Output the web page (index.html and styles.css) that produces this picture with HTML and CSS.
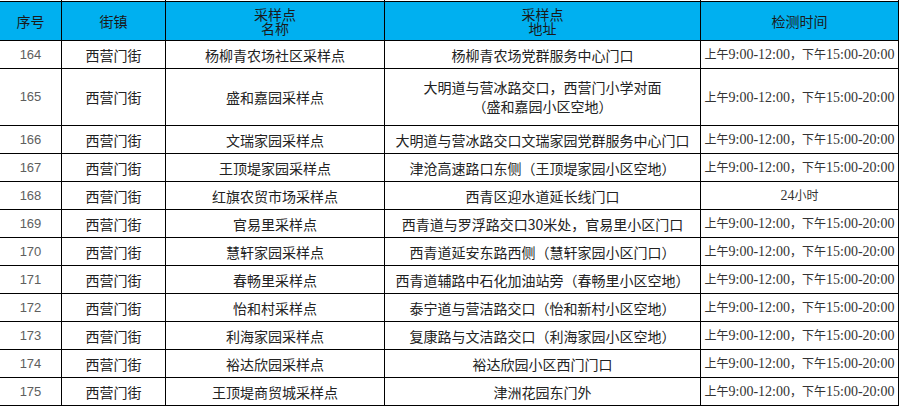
FILE: index.html
```html
<!DOCTYPE html>
<html lang="zh-CN">
<head>
<meta charset="utf-8">
<title>采样点</title>
<link rel="stylesheet" href="styles.css">
</head>
<body>
<table class="sheet">
  <colgroup>
    <col class="c-no"><col class="c-town"><col class="c-name"><col class="c-addr"><col class="c-time">
  </colgroup>
  <tr class="stub"><td></td><td></td><td></td><td></td><td></td></tr>
  <tr class="head">
    <th>序号</th>
    <th>街镇</th>
    <th><span class="hl">采样点</span><span class="hl">名称</span></th>
    <th><span class="hl">采样点</span><span class="hl">地址</span></th>
    <th>检测时间</th>
  </tr>
  <tr><td class="no">164</td><td>西营门街</td><td>杨柳青农场社区采样点</td><td>杨柳青农场党群服务中心门口</td><td class="time"><span class="cn">上午</span>9:00-12:00<span class="cn">，下午</span>15:00-20:00</td></tr>
  <tr class="tall"><td class="no">165</td><td>西营门街</td><td>盛和嘉园采样点</td><td><span class="ln">大明道与营冰路交口，西营门小学对面</span><span class="ln">（盛和嘉园小区空地）</span></td><td class="time"><span class="cn">上午</span>9:00-12:00<span class="cn">，下午</span>15:00-20:00</td></tr>
  <tr><td class="no">166</td><td>西营门街</td><td>文瑞家园采样点</td><td>大明道与营冰路交口文瑞家园党群服务中心门口</td><td class="time"><span class="cn">上午</span>9:00-12:00<span class="cn">，下午</span>15:00-20:00</td></tr>
  <tr><td class="no">167</td><td>西营门街</td><td>王顶堤家园采样点</td><td>津沧高速路口东侧（王顶堤家园小区空地）</td><td class="time"><span class="cn">上午</span>9:00-12:00<span class="cn">，下午</span>15:00-20:00</td></tr>
  <tr><td class="no">168</td><td>西营门街</td><td>红旗农贸市场采样点</td><td>西青区迎水道延长线门口</td><td class="time">24<span class="cn">小时</span></td></tr>
  <tr><td class="no">169</td><td>西营门街</td><td>官易里采样点</td><td>西青道与罗浮路交口30米处，官易里小区门口</td><td class="time"><span class="cn">上午</span>9:00-12:00<span class="cn">，下午</span>15:00-20:00</td></tr>
  <tr><td class="no">170</td><td>西营门街</td><td>慧轩家园采样点</td><td>西青道延安东路西侧（慧轩家园小区门口）</td><td class="time"><span class="cn">上午</span>9:00-12:00<span class="cn">，下午</span>15:00-20:00</td></tr>
  <tr><td class="no">171</td><td>西营门街</td><td>春畅里采样点</td><td>西青道辅路中石化加油站旁（春畅里小区空地）</td><td class="time"><span class="cn">上午</span>9:00-12:00<span class="cn">，下午</span>15:00-20:00</td></tr>
  <tr><td class="no">172</td><td>西营门街</td><td>怡和村采样点</td><td>泰宁道与营洁路交口（怡和新村小区空地）</td><td class="time"><span class="cn">上午</span>9:00-12:00<span class="cn">，下午</span>15:00-20:00</td></tr>
  <tr><td class="no">173</td><td>西营门街</td><td>利海家园采样点</td><td>复康路与文洁路交口（利海家园小区空地）</td><td class="time"><span class="cn">上午</span>9:00-12:00<span class="cn">，下午</span>15:00-20:00</td></tr>
  <tr><td class="no">174</td><td>西营门街</td><td>裕达欣园采样点</td><td>裕达欣园小区西门门口</td><td class="time"><span class="cn">上午</span>9:00-12:00<span class="cn">，下午</span>15:00-20:00</td></tr>
  <tr><td class="no">175</td><td>西营门街</td><td>王顶堤商贸城采样点</td><td>津洲花园东门外</td><td class="time"><span class="cn">上午</span>9:00-12:00<span class="cn">，下午</span>15:00-20:00</td></tr>
</table>
</body>
</html>
```
FILE: styles.css
```css
html, body {
  margin: 0;
  padding: 0;
  background: #ffffff;
  overflow: hidden;
}

.sheet {
  border-collapse: collapse;
  table-layout: fixed;
  width: 899px;
  margin-left: -1px;
  font-family: "Noto Sans CJK SC", sans-serif;
  font-size: 14px;
  color: #222222;
}

.c-no { width: 62px; }
.c-town { width: 104px; }
.c-name { width: 219px; }
.c-addr { width: 316px; }
.c-time { width: 198px; }

.sheet td, .sheet th {
  border: 1px solid #000000;
  padding: 0;
  text-align: center;
  vertical-align: middle;
  white-space: nowrap;
  overflow: hidden;
  height: 27px;
  line-height: 16px;
}

.stub td {
  height: 1px;
  border-top: none;
  line-height: 0;
  font-size: 0;
}

.head th {
  background: #00b0f0;
  height: 38px;
  font-weight: 400;
  font-size: 14px;
  line-height: 14px;
  color: #1a1a1a;
}

.hl {
  display: block;
  height: 14px;
  line-height: 14px;
  overflow: visible;
}

.tall td {
  height: 56px;
}

.ln {
  display: block;
  height: 19px;
  line-height: 19px;
}

.sheet td.no {
  font-family: "Liberation Sans", Arial, sans-serif;
  font-size: 13px;
  color: #5e5e5e;
}

.sheet td.time {
  font-family: "Liberation Serif", "Noto Sans CJK SC", serif;
  font-size: 14px;
  color: #333333;
}

.time .cn {
  font-family: "Noto Sans CJK SC", sans-serif;
  font-size: 12px;
}
```
